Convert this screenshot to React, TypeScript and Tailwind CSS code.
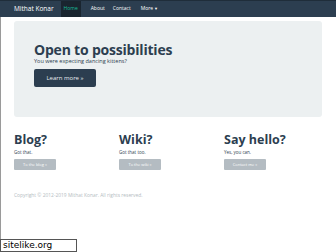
const navItems = ['About', 'Contact'];

const columns = [
  { title: 'Blog?', text: 'Got that.', button: 'To the blog »' },
  { title: 'Wiki?', text: 'Got that too.', button: 'To the wiki »' },
  { title: 'Say hello?', text: 'Yes, you can.', button: 'Contact me »' },
];

export default function App() {
  return (
    <div className="relative w-[336px] h-[252px] overflow-hidden bg-white font-['Open_Sans',sans-serif]">
      {/* navbar */}
      <div className="h-[17px] bg-[#2c3e50] border-t border-[#1f2d3a] flex items-stretch pl-[14px]">
        <div className="flex items-center text-[6.5px] text-white mr-[7px]">Mithat Konar</div>
        <div className="flex items-center px-[3px] bg-[#1a252f] text-[#18bc9c] text-[5px] mr-[6px]">Home</div>
        {navItems.map((item) => (
          <div key={item} className="flex items-center text-[5px] text-white mx-[4px]">
            {item}
          </div>
        ))}
        <div className="flex items-center text-[5px] text-white ml-[6px] gap-[1px]">
          More
          <span className="text-[4px]">▼</span>
        </div>
      </div>

      {/* left page edge */}
      <div className="absolute left-0 top-[17px] w-px h-[222px] bg-[#9a9a9a]" />

      <div className="px-[14px] pt-[4px]">
        {/* jumbotron */}
        <div className="w-[308px] h-[96px] bg-[#ecf0f1] rounded-[3px] pl-[20px] pt-[21px]">
          <h1 className="text-[14px] font-bold text-[#2c3e50] leading-[16px] tracking-[-0.2px]">
            Open to possibilities
          </h1>
          <p className="text-[5.5px] text-[#2c3e50] leading-[6px]">You were expecting dancing kittens?</p>
          <div className="mt-[5px] w-[62px] h-[18px] bg-[#2c3e50] rounded-[2px] flex items-center justify-center text-[6px] text-[#e8ecef]">
            Learn more »
          </div>
        </div>

        {/* columns */}
        <div className="grid grid-cols-[105px_105px_105px] mt-[16px]">
          {columns.map((c) => (
            <div key={c.title}>
              <h2 className="text-[12.5px] font-bold text-[#2c3e50] leading-[14px]">{c.title}</h2>
              <p className="text-[4.5px] text-[#2c3e50] leading-[6px] mt-[2px]">{c.text}</p>
              <div className="mt-[4px] w-[42px] h-[11px] bg-[#b4bcc2] rounded-[1px] flex items-center justify-center text-[4px] text-white">
                {c.button}
              </div>
            </div>
          ))}
        </div>

        {/* footer */}
        <p className="mt-[22px] text-[4.9px] text-[#b4bcc2] leading-[6px]">
          Copyright © 2012-2019 Mithat Konar. All rights reserved.
        </p>
      </div>

      {/* watermark */}
      <div className="absolute left-0 bottom-0 w-[77px] h-[13px] bg-white border border-[#555] flex items-center pl-[2px] text-[9px] leading-none text-black font-['DejaVu_Sans',sans-serif]">
        sitelike.org
      </div>
    </div>
  );
}
